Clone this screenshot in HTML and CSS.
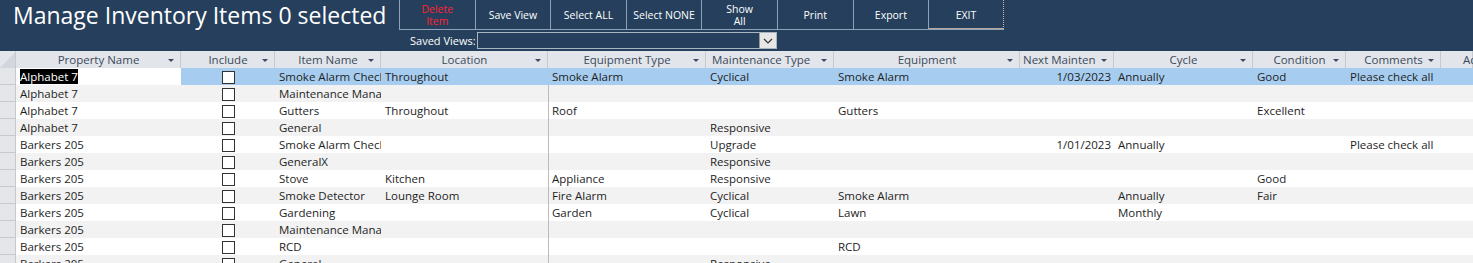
FILE: index.html
```html
<!DOCTYPE html>
<html lang="en">
<head>
  <meta charset="UTF-8">
  <title>Manage Inventory Items</title>
  <link rel="stylesheet" href="styles.css">
</head>
<body>

  <!-- form header -->
  <div class="form-header">
    <h1 class="title">Manage Inventory Items 0 selected</h1>
    <div class="toolbar">
      <div class="buttons">
        <button class="btn btn-danger">Delete<br>Item</button>
        <button class="btn">Save View</button>
        <button class="btn">Select ALL</button>
        <button class="btn">Select NONE</button>
        <button class="btn">Show<br>All</button>
        <button class="btn">Print</button>
        <button class="btn">Export</button>
        <button class="btn btn-focus">EXIT</button>
      </div>
      <div class="views">
        <label class="views-label">Saved Views:</label>
        <div class="combo">
          <span class="combo-text"></span>
          <span class="combo-arrow">
            <svg width="10" height="6" viewBox="0 0 10 6"><path d="M1 1 L5 5 L9 1" fill="none" stroke="#333" stroke-width="1.2"/></svg>
          </span>
        </div>
      </div>
    </div>
  </div>

  <!-- datasheet -->
  <table class="sheet">
    <colgroup>
      <col style="width:16px">
      <col style="width:165px">
      <col style="width:94px">
      <col style="width:106px">
      <col style="width:167px">
      <col style="width:158px">
      <col style="width:128px">
      <col style="width:186px">
      <col style="width:94px">
      <col style="width:139px">
      <col style="width:93px">
      <col style="width:95px">
      <col style="width:32px">
    </colgroup>
    <thead>
      <tr>
        <th class="corner"></th>
        <th>Property Name<i class="arrow"></i></th>
        <th>Include<i class="arrow"></i></th>
        <th>Item Name<i class="arrow"></i></th>
        <th>Location<i class="arrow"></i></th>
        <th>Equipment Type<i class="arrow"></i></th>
        <th class="tight">Maintenance Type<i class="arrow"></i></th>
        <th>Equipment<i class="arrow"></i></th>
        <th class="left">Next Mainten<i class="arrow"></i></th>
        <th>Cycle<i class="arrow"></i></th>
        <th>Condition<i class="arrow"></i></th>
        <th>Comments<i class="arrow"></i></th>
        <th class="last">Ac</th>
      </tr>
    </thead>
    <tbody>
      <tr class="selected">
        <td class="sel"></td>
        <td class="current"><span class="hl">Alphabet 7</span></td>
        <td class="chk"><span class="box"></span></td>
        <td>Smoke Alarm Check</td>
        <td>Throughout</td>
        <td class="split">Smoke Alarm</td>
        <td>Cyclical</td>
        <td>Smoke Alarm</td>
        <td class="num">1/03/2023</td>
        <td>Annually</td>
        <td>Good</td>
        <td>Please check all</td>
        <td></td>
      </tr>
      <tr>
        <td class="sel"></td>
        <td>Alphabet 7</td>
        <td class="chk"><span class="box"></span></td>
        <td>Maintenance Management</td>
        <td></td><td class="split"></td><td></td><td></td><td></td><td></td><td></td><td></td><td></td>
      </tr>
      <tr>
        <td class="sel"></td>
        <td>Alphabet 7</td>
        <td class="chk"><span class="box"></span></td>
        <td>Gutters</td>
        <td>Throughout</td>
        <td class="split">Roof</td>
        <td></td>
        <td>Gutters</td>
        <td></td><td></td>
        <td>Excellent</td>
        <td></td><td></td>
      </tr>
      <tr>
        <td class="sel"></td>
        <td>Alphabet 7</td>
        <td class="chk"><span class="box"></span></td>
        <td>General</td>
        <td></td><td class="split"></td>
        <td>Responsive</td>
        <td></td><td></td><td></td><td></td><td></td><td></td>
      </tr>
      <tr>
        <td class="sel"></td>
        <td>Barkers 205</td>
        <td class="chk"><span class="box"></span></td>
        <td>Smoke Alarm Check</td>
        <td></td><td class="split"></td>
        <td>Upgrade</td>
        <td></td>
        <td class="num">1/01/2023</td>
        <td>Annually</td>
        <td></td>
        <td>Please check all</td>
        <td></td>
      </tr>
      <tr>
        <td class="sel"></td>
        <td>Barkers 205</td>
        <td class="chk"><span class="box"></span></td>
        <td>GeneralX</td>
        <td></td><td class="split"></td>
        <td>Responsive</td>
        <td></td><td></td><td></td><td></td><td></td><td></td>
      </tr>
      <tr>
        <td class="sel"></td>
        <td>Barkers 205</td>
        <td class="chk"><span class="box"></span></td>
        <td>Stove</td>
        <td>Kitchen</td>
        <td class="split">Appliance</td>
        <td>Responsive</td>
        <td></td><td></td><td></td>
        <td>Good</td>
        <td></td><td></td>
      </tr>
      <tr>
        <td class="sel"></td>
        <td>Barkers 205</td>
        <td class="chk"><span class="box"></span></td>
        <td>Smoke Detector</td>
        <td>Lounge Room</td>
        <td class="split">Fire Alarm</td>
        <td>Cyclical</td>
        <td>Smoke Alarm</td>
        <td></td>
        <td>Annually</td>
        <td>Fair</td>
        <td></td><td></td>
      </tr>
      <tr>
        <td class="sel"></td>
        <td>Barkers 205</td>
        <td class="chk"><span class="box"></span></td>
        <td>Gardening</td>
        <td></td>
        <td class="split">Garden</td>
        <td>Cyclical</td>
        <td>Lawn</td>
        <td></td>
        <td>Monthly</td>
        <td></td><td></td><td></td>
      </tr>
      <tr>
        <td class="sel"></td>
        <td>Barkers 205</td>
        <td class="chk"><span class="box"></span></td>
        <td>Maintenance Management</td>
        <td></td><td class="split"></td><td></td><td></td><td></td><td></td><td></td><td></td><td></td>
      </tr>
      <tr>
        <td class="sel"></td>
        <td>Barkers 205</td>
        <td class="chk"><span class="box"></span></td>
        <td>RCD</td>
        <td></td><td class="split"></td><td></td>
        <td>RCD</td>
        <td></td><td></td><td></td><td></td><td></td>
      </tr>
      <tr>
        <td class="sel"></td>
        <td>Barkers 205</td>
        <td class="chk"><span class="box"></span></td>
        <td>General</td>
        <td></td><td class="split"></td>
        <td>Responsive</td>
        <td></td><td></td><td></td><td></td><td></td><td></td>
      </tr>
    </tbody>
  </table>

</body>
</html>
```

FILE: styles.css
```css
body {
  margin: 0;
  padding: 0;
  background-color: #fff;
  font-family: "Open Sans", "Noto Sans", sans-serif;
  overflow: hidden;
}

.form-header {
  background-color: #253f5c;
  height: 51px;
  display: flex;
  align-items: flex-start;
}

.title {
  margin: 0;
  padding: 0 0 0 13px;
  width: 386px;
  font-size: 23px;
  font-weight: normal;
  line-height: 30px;
  color: #fff;
  white-space: nowrap;
}

.toolbar {
  display: flex;
  flex-direction: column;
}

.buttons {
  display: flex;
  border-bottom: 1px solid #8ea2b8;
}

.btn {
  width: 75.6px;
  height: 29px;
  padding: 0;
  background: transparent;
  border: none;
  border-left: 1px solid #8ea2b8;
  color: #fff;
  font-family: inherit;
  font-size: 10.5px;
  line-height: 12px;
  cursor: pointer;
}

.btn-danger {
  color: #ff2430;
}

.btn-focus {
  border-right: 1px dotted #c9b8a8;
  box-shadow: inset 0 -1px 0 #b9a99a;
}

.views {
  display: flex;
  align-items: center;
  margin-top: 2px;
}

.views-label {
  color: #fff;
  font-size: 11px;
  padding-left: 11px;
  width: 67px;
}

.combo {
  display: flex;
  width: 300px;
  height: 17px;
  border: 1px solid #a8b4c2;
  box-sizing: border-box;
}

.combo-text {
  flex: 1;
}

.combo-arrow {
  width: 16px;
  background-color: #e6e6e6;
  border-left: 1px solid #999;
  display: flex;
  align-items: center;
  justify-content: center;
}

/* datasheet */
.sheet {
  border-collapse: collapse;
  table-layout: fixed;
  width: 1473px;
  font-size: 11.5px;
  color: #1e1e1e;
}

.sheet th {
  position: relative;
  height: 17px;
  padding: 1px 0 0 0;
  box-sizing: border-box;
  background-color: #e2e5ea;
  box-shadow: inset -1px 0 0 #c6cad0;
  color: #3b4a5c;
  font-weight: normal;
  text-align: center;
  white-space: nowrap;
  overflow: hidden;
  line-height: 16px;
}

.sheet th.left {
  text-align: left;
  padding-left: 3px;
}

.sheet th.tight {
  text-align: left;
  padding-left: 6px;
}

.sheet th.last {
  text-align: left;
  padding-left: 22px;
}

.sheet th.corner {
  background: linear-gradient(135deg, #e2e5ea 50%, #d3d7dd 50%);
}

.arrow {
  position: absolute;
  right: 7px;
  top: 8px;
  border-left: 3px solid transparent;
  border-right: 3px solid transparent;
  border-top: 3px solid #3b4a5c;
}

.sheet td {
  height: 17px;
  box-sizing: border-box;
  padding: 1px 0 0 4px;
  white-space: nowrap;
  overflow: hidden;
  text-overflow: clip;
  line-height: 16px;
}

.sheet tbody tr:nth-child(even) td {
  background-color: #f2f2f2;
}

.sheet td.sel {
  padding: 0;
  background-color: #e4e6e9 !important;
  box-shadow: inset -1px 0 0 #c6cad0, inset 0 -1px 0 #c6cad0;
}

.sheet td.split {
  box-shadow: inset 1px 0 0 #b8bcc2;
}

.sheet td.num {
  text-align: right;
  padding: 1px 3px 0 0;
}

.sheet td.chk {
  text-align: center;
  padding: 0;
}

.box {
  display: inline-block;
  width: 11px;
  height: 11px;
  border: 1px solid #333;
  background-color: #fff;
  vertical-align: middle;
}

.sheet tr.selected td {
  background-color: #a6cdef;
}

.sheet tr.selected td.split {
  box-shadow: none;
}

.sheet tr.selected td.current {
  background-color: #fff;
}

.hl {
  background-color: #000;
  color: #fff;
}
```
